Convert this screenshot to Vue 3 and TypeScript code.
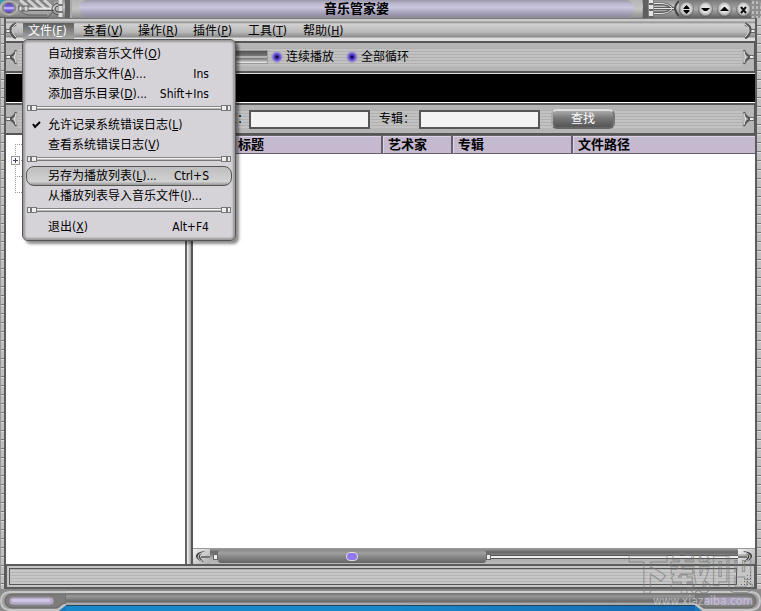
<script setup lang="ts">
import { ref } from 'vue'

interface MenuEntry {
  kind: 'item' | 'separator'
  text?: string
  key?: string
  tail?: string
  shortcut?: string
  checked?: boolean
  active?: boolean
}

const menus = [
  { text: '文件', key: 'F' },
  { text: '查看', key: 'V' },
  { text: '操作', key: 'R' },
  { text: '插件', key: 'P' },
  { text: '工具', key: 'T' },
  { text: '帮助', key: 'H' },
]

const entries: MenuEntry[] = [
  { kind: 'item', text: '自动搜索音乐文件', key: 'O' },
  { kind: 'item', text: '添加音乐文件', key: 'A', tail: '...', shortcut: 'Ins' },
  { kind: 'item', text: '添加音乐目录', key: 'D', tail: '...', shortcut: 'Shift+Ins' },
  { kind: 'separator' },
  { kind: 'item', text: '允许记录系统错误日志', key: 'L', checked: true },
  { kind: 'item', text: '查看系统错误日志', key: 'V' },
  { kind: 'separator' },
  { kind: 'item', text: '另存为播放列表', key: 'L', tail: '...', shortcut: 'Ctrl+S', active: true },
  { kind: 'item', text: '从播放列表导入音乐文件', key: 'I', tail: '...' },
  { kind: 'separator' },
  { kind: 'item', text: '退出', key: 'X', shortcut: 'Alt+F4' },
]

const artist = ref('')
const album = ref('')
const continuous = ref(true)
const loopAll = ref(true)
</script>

<template>
  <div class="window">
    <header class="title-bar">
      <svg class="title-left" width="72" height="18" viewBox="0 0 72 18" aria-hidden="true">
        <defs>
          <linearGradient id="metal" x1="0" y1="0" x2="0" y2="1">
            <stop offset="0" stop-color="#8a8a8a" />
            <stop offset=".35" stop-color="#c4c4c4" />
            <stop offset="1" stop-color="#777" />
          </linearGradient>
          <linearGradient id="gem" x1="0" y1="0" x2="0" y2="1">
            <stop offset="0" stop-color="#54458f" />
            <stop offset=".35" stop-color="#7a62e0" />
            <stop offset=".5" stop-color="#d9cfff" />
            <stop offset=".65" stop-color="#8a72f0" />
            <stop offset="1" stop-color="#4b3c86" />
          </linearGradient>
        </defs>
        <rect width="72" height="18" fill="url(#metal)" />
        <path d="M0 0H5Q0 2 0 7Z" fill="#2d9db8" />
        <path d="M18 0h36v9q-2 2-4 6H20z" fill="#8c8c8c" />
        <g stroke="#d0d0d0" stroke-width="3">
          <path d="M20 0l7 6M28 0l9 8M36 0l10 9M44 0l9 8" />
        </g>
        <g stroke="#777" stroke-width="1"><path d="M24 0l9 7M32 0l10 8M40 0l10 8" /></g>
        <path d="M20 11h32l-4 4H28q-6-1-8-4z" fill="#a4a4a4" />
        <path d="M0 17.500H48L53 12" fill="none" stroke="#5e5e5e" />
        <path d="M18 6Q20 13 28 15H47" fill="none" stroke="#5e5e5e" />
        <ellipse cx="9" cy="8" rx="8" ry="7" fill="#8d8d8d" stroke="#c4c4c4" />
        <ellipse cx="9" cy="8" rx="5" ry="5" fill="url(#gem)" />
        <path d="M19 8.500h35" stroke="#e6e6e6" stroke-width="2" />
        <path d="M19 10.500h35" stroke="#555" />
        <rect x="19" y="6" width="3" height="5" fill="#eee" stroke="#666" />
        <rect x="24" y="6" width="4" height="5" fill="#ddd" stroke="#666" />
        <path d="M59 3q-7 1-7 6t7 6M59 6q-4 0-4 3t4 3" fill="none" stroke="#4f4f4f" />
        <path d="M60.500 0v18" stroke="#777" stroke-width="5" />
        <path d="M60.500 0v4M60.500 6v5M60.500 13v4" stroke="#ddd" stroke-width="4" />
        <rect x="65" width="5" height="18" fill="#626262" />
        <rect x="70" width="2" height="18" fill="#aaa" />
      </svg>
      <div class="title-track"><h1>音乐管家婆</h1></div>
      <svg class="title-end" width="37" height="18" viewBox="0 0 37 18" aria-hidden="true">
        <rect width="37" height="18" fill="url(#metal)" />
        <rect x="1" width="5" height="18" fill="#5f5f5f" />
        <path d="M9 0v18" stroke="#666" stroke-width="5" />
        <path d="M9 0v3M9 5v4M9 11v5" stroke="#e4e4e4" stroke-width="4" />
        <g fill="none" stroke="#5c5c5c" stroke-width="3">
          <path d="M12 4h8q6 0 10 4M12 8.500h20M12 13h8q6 0 10-4" />
        </g>
        <g fill="none" stroke="#e4e4e4">
          <path d="M12 3.500h8q6 0 10 4M12 8.500h20M12 13.500h8q6 0 10-4" />
        </g>
        <path d="M37 1q-8 7 0 15" fill="none" stroke="#444" stroke-width="2" />
      </svg>
      <div class="window-buttons">
        <button type="button" aria-label="还原">
          <svg width="15" height="15" viewBox="0 0 15 15"><path d="M7.500 3l3 3v1h-6V6zM7.500 12l-3-3V8h6v1z" /></svg>
        </button>
        <button type="button" aria-label="最小化">
          <svg width="15" height="15" viewBox="0 0 15 15"><path d="M3 6h9L9 9H6z" /></svg>
        </button>
        <button type="button" aria-label="最大化">
          <svg width="15" height="15" viewBox="0 0 15 15"><path d="M3 9h9L8 5H7z" /></svg>
        </button>
        <button type="button" aria-label="关闭">
          <svg width="15" height="15" viewBox="0 0 15 15"><path d="M5 5l5 6M10 5l-5 6" stroke="#111" stroke-width="2" /></svg>
        </button>
      </div>
      <div class="title-corner"></div>
    </header>

    <div class="middle">
      <div class="rail rail-left"></div>
      <div class="client">
        <nav class="menu-bar">
          <svg class="plug" width="12" height="16" viewBox="0 0 12 16" aria-hidden="true">
            <path d="M0 6.500h5v3H0z" fill="#eee" stroke="#666" />
            <path d="M10 1Q4 3 5 8t5 7" fill="none" stroke="#555" stroke-width="3" />
            <path d="M10 1Q5 4 6 8t4 6" fill="none" stroke="#e4e4e4" />
          </svg>
          <div class="menu-items">
            <button v-for="(m, i) in menus" :key="m.key" type="button" :class="{ open: i === 0 }">
              {{ m.text }}(<u>{{ m.key }}</u>)
            </button>
          </div>
          <svg class="plug" width="12" height="16" viewBox="0 0 12 16" aria-hidden="true">
            <path d="M7 6.500h5v3H7z" fill="#eee" stroke="#666" />
            <path d="M2 1Q8 3 7 8t-5 7" fill="none" stroke="#555" stroke-width="3" />
            <path d="M2 1Q7 4 6 8t-4 6" fill="none" stroke="#e4e4e4" />
          </svg>

          <div class="popup" role="menu">
            <template v-for="(e, i) in entries" :key="i">
              <div v-if="e.kind === 'separator'" class="separator" role="separator">
                <i class="clamp"></i><i class="clamp wide"></i><i class="bar"></i><i class="clamp wide"></i><i class="clamp"></i>
              </div>
              <button v-else type="button" role="menuitem" class="entry" :class="{ active: e.active }">
                <span class="tick">
                  <svg v-if="e.checked" width="9" height="8" viewBox="0 0 9 8"><path d="M1 3l2 3 5-5" fill="none" stroke="#000" stroke-width="2" /></svg>
                </span>
                <span class="entry-text">{{ e.text }}(<u>{{ e.key }}</u>){{ e.tail }}</span>
                <span class="shortcut">{{ e.shortcut }}</span>
              </button>
            </template>
          </div>
        </nav>

        <div class="strip">
          <svg class="plug" width="12" height="16" viewBox="0 0 12 16" aria-hidden="true">
            <path d="M0 6.500h5v3H0z" fill="#eee" stroke="#666" />
            <path d="M10 1Q9 5 5 7v2q4 2 5 6" fill="none" stroke="#555" stroke-width="2" />
            <path d="M10 2Q7 8 10 14" fill="none" stroke="#e0e0e0" />
          </svg>
          <div class="strip-body playback">
            <div class="gauge"></div>
            <label class="toggle"><input v-model="continuous" type="checkbox" />连续播放</label>
            <label class="toggle"><input v-model="loopAll" type="checkbox" />全部循环</label>
          </div>
          <svg class="plug" width="12" height="16" viewBox="0 0 12 16" aria-hidden="true">
            <path d="M7 6.500h5v3H7z" fill="#eee" stroke="#666" />
            <path d="M2 1Q3 5 7 7v2q-4 2-5 6" fill="none" stroke="#555" stroke-width="2" />
            <path d="M2 2Q5 8 2 14" fill="none" stroke="#e0e0e0" />
          </svg>
        </div>

        <div class="display"></div>

        <form class="strip" @submit.prevent>
          <svg class="plug" width="12" height="16" viewBox="0 0 12 16" aria-hidden="true">
            <path d="M0 6.500h5v3H0z" fill="#eee" stroke="#666" />
            <path d="M10 1Q9 5 5 7v2q4 2 5 6" fill="none" stroke="#555" stroke-width="2" />
            <path d="M10 2Q7 8 10 14" fill="none" stroke="#e0e0e0" />
          </svg>
          <div class="strip-body search">
            <label for="artist" class="first-label">艺术家：</label>
            <input id="artist" v-model="artist" type="text" />
            <label for="album">专辑：</label>
            <input id="album" v-model="album" type="text" />
            <button type="submit" class="find">查找</button>
          </div>
          <svg class="plug" width="12" height="16" viewBox="0 0 12 16" aria-hidden="true">
            <path d="M7 6.500h5v3H7z" fill="#eee" stroke="#666" />
            <path d="M2 1Q3 5 7 7v2q-4 2-5 6" fill="none" stroke="#555" stroke-width="2" />
            <path d="M2 2Q5 8 2 14" fill="none" stroke="#e0e0e0" />
          </svg>
        </form>

        <div class="panes">
          <aside class="tree">
            <svg width="20" height="60" viewBox="0 0 20 60" aria-hidden="true">
              <g fill="none" stroke="#999" stroke-dasharray="1 1">
                <path d="M9.500 9v48M9 9.500h9M9 25.500h9M9 41.500h9M9 57.500h9" />
              </g>
              <rect x="5.500" y="21.500" width="8" height="8" fill="#fff" stroke="#999" />
              <path d="M7 25.500h5M9.500 23v5" stroke="#446" />
            </svg>
          </aside>
          <div class="splitter"></div>
          <section class="list">
            <table>
              <colgroup>
                <col class="c-no" />
                <col class="c-title" />
                <col class="c-artist" />
                <col class="c-album" />
                <col />
              </colgroup>
              <thead>
                <tr>
                  <th></th>
                  <th>标题</th>
                  <th>艺术家</th>
                  <th>专辑</th>
                  <th>文件路径</th>
                </tr>
              </thead>
            </table>
            <div class="list-body"></div>
            <div class="scrollbar">
              <button type="button" class="arrow" aria-label="向左">
                <svg width="17" height="15" viewBox="0 0 17 15">
                  <path d="M12 2Q2 3 3 8q2 4 8 5Q7 9 7 7t5-5z" fill="#444" />
                  <path d="M10 3Q5 5 5 8q1 3 4 4" fill="none" stroke="#ccc" />
                  <path d="M8 8h9" stroke="#777" stroke-width="2" />
                </svg>
              </button>
              <div class="track">
                <div class="pin"></div>
                <div class="thumb"><span class="jewel"></span></div>
                <div class="pin"></div>
                <div class="rod"></div>
              </div>
              <button type="button" class="arrow" aria-label="向右">
                <svg width="17" height="15" viewBox="0 0 17 15">
                  <path d="M5 2q10 1 9 6-2 4-8 5 4-4 4-6T5 2z" fill="#333" />
                  <path d="M7 3q5 2 5 5-1 3-4 4" fill="none" stroke="#ddd" />
                  <path d="M0 8h9" stroke="#777" stroke-width="2" />
                </svg>
              </button>
            </div>
          </section>
        </div>

        <div class="status">
          <div class="status-text"></div>
          <div class="grip"></div>
        </div>
      </div>
      <div class="rail rail-right"></div>
    </div>

    <footer class="base">
      <svg class="cap" width="66" height="22" viewBox="0 0 66 22" aria-hidden="true">
        <path d="M0 0h66v16l-7 6H0z" fill="#8b8b8b" />
        <path d="M66 3H9Q1 4 1 12t8 9h49l8-6" fill="#a0a0a0" stroke="#c6c6c6" stroke-width="2" />
        <path d="M66 5H12Q5 6 5 12t7 7h44q4-1 6-4l4-1z" fill="#7c7c7c" stroke="#666" />
        <rect x="9" y="8" width="45" height="8" rx="4" fill="#b6abc9" stroke="#888" />
        <rect x="12" y="10" width="38" height="3" rx="1" fill="#d0c6e2" />
      </svg>
      <div class="base-mid"><div class="base-bar"></div><div class="desktop"></div></div>
      <svg class="cap" width="66" height="22" viewBox="0 0 66 22" aria-hidden="true">
        <path d="M0 0h66v22H7l-7-6z" fill="#8b8b8b" />
        <path d="M0 3h57q8 1 8 9t-8 9H8l-8-6" fill="#a0a0a0" stroke="#c6c6c6" stroke-width="2" />
        <path d="M0 5h54q7 1 7 7t-7 7H10q-4-1-6-4l-4-1z" fill="#7c7c7c" stroke="#666" />
        <rect x="9" y="8" width="48" height="8" rx="4" fill="#a9a0bb" stroke="#888" />
      </svg>
    </footer>

    <div class="watermark">
      <span class="wm-name">下载吧</span>
      <span class="wm-url">www.xiazaiba.com</span>
    </div>
  </div>
</template>

<style>
body {
  background: #8c8c8c;
}
</style>

<style scoped>
.window {
  position: relative;
  display: flex;
  flex-direction: column;
  min-height: 100vh;
  overflow: hidden;
  background: #8f8f8f;
  color: #000;
  font: 12px/16px "DejaVu Sans Condensed", "Noto Sans CJK SC", sans-serif;
}
.window * {
  box-sizing: border-box;
}
button,
input {
  margin: 0;
  padding: 0;
  border: 0;
  background: none;
  color: inherit;
  font: inherit;
}
svg {
  display: block;
  flex: none;
}
u {
  text-underline-offset: 1px;
}

.title-bar {
  display: flex;
  height: 18px;
  background: linear-gradient(#858585, #bbb 35%, #747474);
}
.title-track {
  flex: 1;
  padding: 0 8px 0 7px;
  background: linear-gradient(#b4b4b4, #c4c4c4 50%, #8d8d8d);
}
h1 {
  height: 17px;
  margin: 0;
  border-radius: 8px;
  background: linear-gradient(#9c98aa, #bab5cc 20%, #cbc7de 45%, #b1adc5 65%, #8e899d);
  font-size: 13px;
  font-weight: 700;
  line-height: 17px;
  text-align: center;
}
.window-buttons {
  display: flex;
  align-items: center;
  gap: 4px;
  background: linear-gradient(#777, #aaa 50%, #606060);
}
.window-buttons button {
  width: 15px;
  height: 15px;
  border-radius: 8px;
  background: radial-gradient(circle at 50% 45%, #e4e4e4 30%, #c0c0c0 50%, #555 72%);
}
.title-corner {
  width: 10px;
  border-top-right-radius: 8px;
  background: radial-gradient(#bbb 1px, transparent 1px) 0 0 / 4px 5px #8e8e8e;
}

.middle {
  display: flex;
  flex: 1;
}
.rail {
  flex: none;
  width: 6px;
  background: repeating-linear-gradient(#c0c0c0 0 7px, #777 7px 8px, #dedede 8px 9px);
}
.rail-left {
  border-left: 1px solid #999;
  border-right: 2px solid #5c5c5c;
}
.rail-right {
  border-left: 2px solid #5c5c5c;
}
.client {
  display: flex;
  flex: 1;
  flex-direction: column;
  min-width: 0;
}

.menu-bar {
  position: relative;
  display: flex;
  align-items: center;
  height: 23px;
  padding-top: 3px;
  background: linear-gradient(#777 0 1px, #ccc 1px 3px, #8a8a8a 4px, #d0d0d0 6px, #b9b9b9 14px, #8b8b8b 19px, #dedede 20px);
}
.plug {
  overflow: visible;
}
.menu-items {
  display: flex;
  flex: 1;
  gap: 4px;
  padding-left: 5px;
}
.menu-items button {
  width: 51px;
  height: 16px;
  padding-left: 5px;
  line-height: 17px;
  text-align: left;
  white-space: nowrap;
}
.menu-items .open {
  background: linear-gradient(#5e5e5e, #a9a9a9);
  color: #fff;
}

.popup {
  position: absolute;
  z-index: 5;
  top: 21px;
  left: 16px;
  width: 214px;
  padding: 4px 3px 3px;
  border: 1px solid #555;
  border-radius: 6px;
  background: #d6d3d8;
  box-shadow: inset 0 0 2px 2px #9a9a9a, 3px 3px 3px rgba(0, 0, 0, 0.45);
}
.entry {
  display: flex;
  align-items: center;
  width: 100%;
  height: 20px;
  padding: 0 23px 0 6px;
  border-radius: 8px;
  text-align: left;
  white-space: nowrap;
}
.entry.active {
  padding: 0 22px 0 5px;
  border: 1px solid #555;
  background: linear-gradient(#bdbdbd, #d2d2d2 80%, #999);
}
.tick {
  width: 16px;
}
.entry-text {
  flex: 1;
}
.separator {
  display: flex;
  align-items: center;
  height: 11px;
  padding: 0 1px 3px;
}
.clamp {
  width: 4px;
  height: 6px;
  border: 1px solid #777;
  background: #eee;
}
.clamp.wide {
  width: 6px;
}
.bar {
  flex: 1;
  height: 4px;
  background: linear-gradient(#888 1px, #f5f5f5 1px 2px, #bbb 2px 3px, #777 3px);
}

.strip {
  display: flex;
  align-items: center;
  height: 32px;
  margin: 0;
  border-top: 2px solid #565656;
  border-bottom: 2px solid #565656;
  border-right: 1px solid #565656;
  background: #b5b5b5;
}
.strip-body {
  display: flex;
  flex: 1;
  align-items: center;
  height: 18px;
  background: repeating-linear-gradient(#b0b0b0 0 1px, #c2c2c2 1px 3px);
}
.gauge {
  width: 180px;
  height: 14px;
  margin-left: 70px;
  border: 1px solid #999;
  background: linear-gradient(#555, #777 5px, #eee 6px, #777 7px, #999 9px, #eee 12px);
}
.toggle {
  display: flex;
  align-items: center;
  gap: 3px;
  margin-left: 3px;
}
.toggle + .toggle {
  margin-left: 12px;
}
.toggle input {
  width: 12px;
  height: 12px;
  border: 1px solid #a9a7b4;
  border-radius: 6px;
  background: radial-gradient(#140c40 1px, #4a35b8 2px, #7d68dd 4px, #c9c0ee 6px);
  appearance: none;
}
.display {
  height: 30px;
  border-top: 1px solid #ddd;
  border-bottom: 1px solid #fff;
  background: #000;
}
.search label {
  width: 40px;
}
.search .first-label {
  width: 48px;
  margin-left: 183px;
}
.search input {
  width: 121px;
  height: 19px;
  padding: 0 3px;
  border: 2px solid #565656;
  background: #f3f3f3;
}
.search input + label {
  margin-left: 9px;
}
.search .find {
  width: 64px;
  height: 20px;
  margin-left: 11px;
  border: 2px solid #c8c8c8;
  border-color: #ddd #777 #666 #aaa;
  border-radius: 6px;
  background: linear-gradient(#aaa, #777 45%, #555);
  color: #fff;
  line-height: 16px;
}

.panes {
  display: flex;
  flex: 1;
  background: #fff;
}
.tree {
  flex: none;
  width: 179px;
  background: #fff;
}
.splitter {
  width: 8px;
  border-right: 2px solid #565656;
  border-left: 2px solid #666;
  background: linear-gradient(90deg, #f4f4f4, #a4a4a4);
}
.list {
  display: flex;
  flex: 1;
  flex-direction: column;
  min-width: 0;
}
table {
  width: 100%;
  border-spacing: 0;
  table-layout: fixed;
}
.c-no {
  width: 40px;
}
.c-title {
  width: 150px;
}
.c-artist {
  width: 70px;
}
.c-album {
  width: 120px;
}
th {
  height: 19px;
  padding: 0 0 0 5px;
  border-top: 1px solid #666;
  border-right: 2px solid #666070;
  border-bottom: 1px solid #666070;
  background: #c5b9cf;
  box-shadow: inset 1px 1px #ddd4e4;
  font-size: 13px;
  line-height: 17px;
  text-align: left;
}
th:last-child {
  border-right: 0;
}
.list-body {
  flex: 1;
}
.scrollbar {
  display: flex;
  height: 16px;
  border-top: 1px solid #999;
  background: #ccc;
}
.arrow {
  width: 17px;
  height: 15px;
  background: linear-gradient(135deg, #f2f2f2, #aaa);
}
.track {
  display: flex;
  flex: 1;
  align-items: center;
  padding-left: 3px;
  background: linear-gradient(#999, #666 3px, #777 5px, #aaa 9px, #bbb);
}
.pin {
  width: 5px;
  height: 6px;
  border: 1px solid #666;
  background: #eee;
}
.thumb {
  display: flex;
  align-items: center;
  justify-content: center;
  width: 51%;
  height: 13px;
  border-radius: 3px;
  background: linear-gradient(#8b8b8b, #a0a0a0 3px, #858585 7px, #656565);
}
.jewel {
  width: 12px;
  height: 9px;
  border: 1px solid #ddd;
  border-radius: 4px;
  background: #9278ea;
}
.rod {
  flex: 1;
  height: 4px;
  background: linear-gradient(#555 1px, #eee 1px 3px, #555 3px);
}

.status {
  display: flex;
  height: 25px;
  padding: 2px 3px 2px 2px;
  border: 2px solid #5c5c5c;
  border-right-width: 1px;
  border-left-width: 1px;
  background: #c6c6c6;
}
.status-text {
  flex: 1;
  border: 1px solid #565656;
  background: repeating-linear-gradient(#b4b4b4 0 1px, #c6c6c6 1px 3px);
}
.grip {
  width: 14px;
  background: radial-gradient(#555 1px, transparent 1px) 0 0 / 3px 3px;
  clip-path: polygon(100% 20%, 100% 100%, 10% 100%);
}

.base {
  display: flex;
  height: 22px;
  background: #187bbd;
}
.base-mid {
  display: flex;
  flex: 1;
  flex-direction: column;
}
.base-bar {
  height: 17px;
  border-bottom: 1px solid #23455c;
  background: linear-gradient(#888 2px, #d0d0d0 2px 4px, #777 4px 5px, #9a9a9a 7px, #676767 13px, #aaa 14px);
}
.desktop {
  flex: 1;
  background: linear-gradient(90deg, #1789cb, #1789cb 50%, #1769b0);
}

.watermark {
  position: absolute;
  right: 8px;
  bottom: 3px;
  display: flex;
  flex-direction: column;
  align-items: flex-end;
  pointer-events: none;
}
.wm-name {
  color: transparent;
  font-family: "Noto Sans CJK SC", sans-serif;
  font-size: 42px;
  font-weight: 900;
  line-height: 42px;
  -webkit-text-stroke: 1px rgba(120, 120, 120, 0.7);
}
.wm-url {
  margin-top: 2px;
  color: rgba(220, 220, 225, 0.6);
  line-height: 14px;
}
</style>
